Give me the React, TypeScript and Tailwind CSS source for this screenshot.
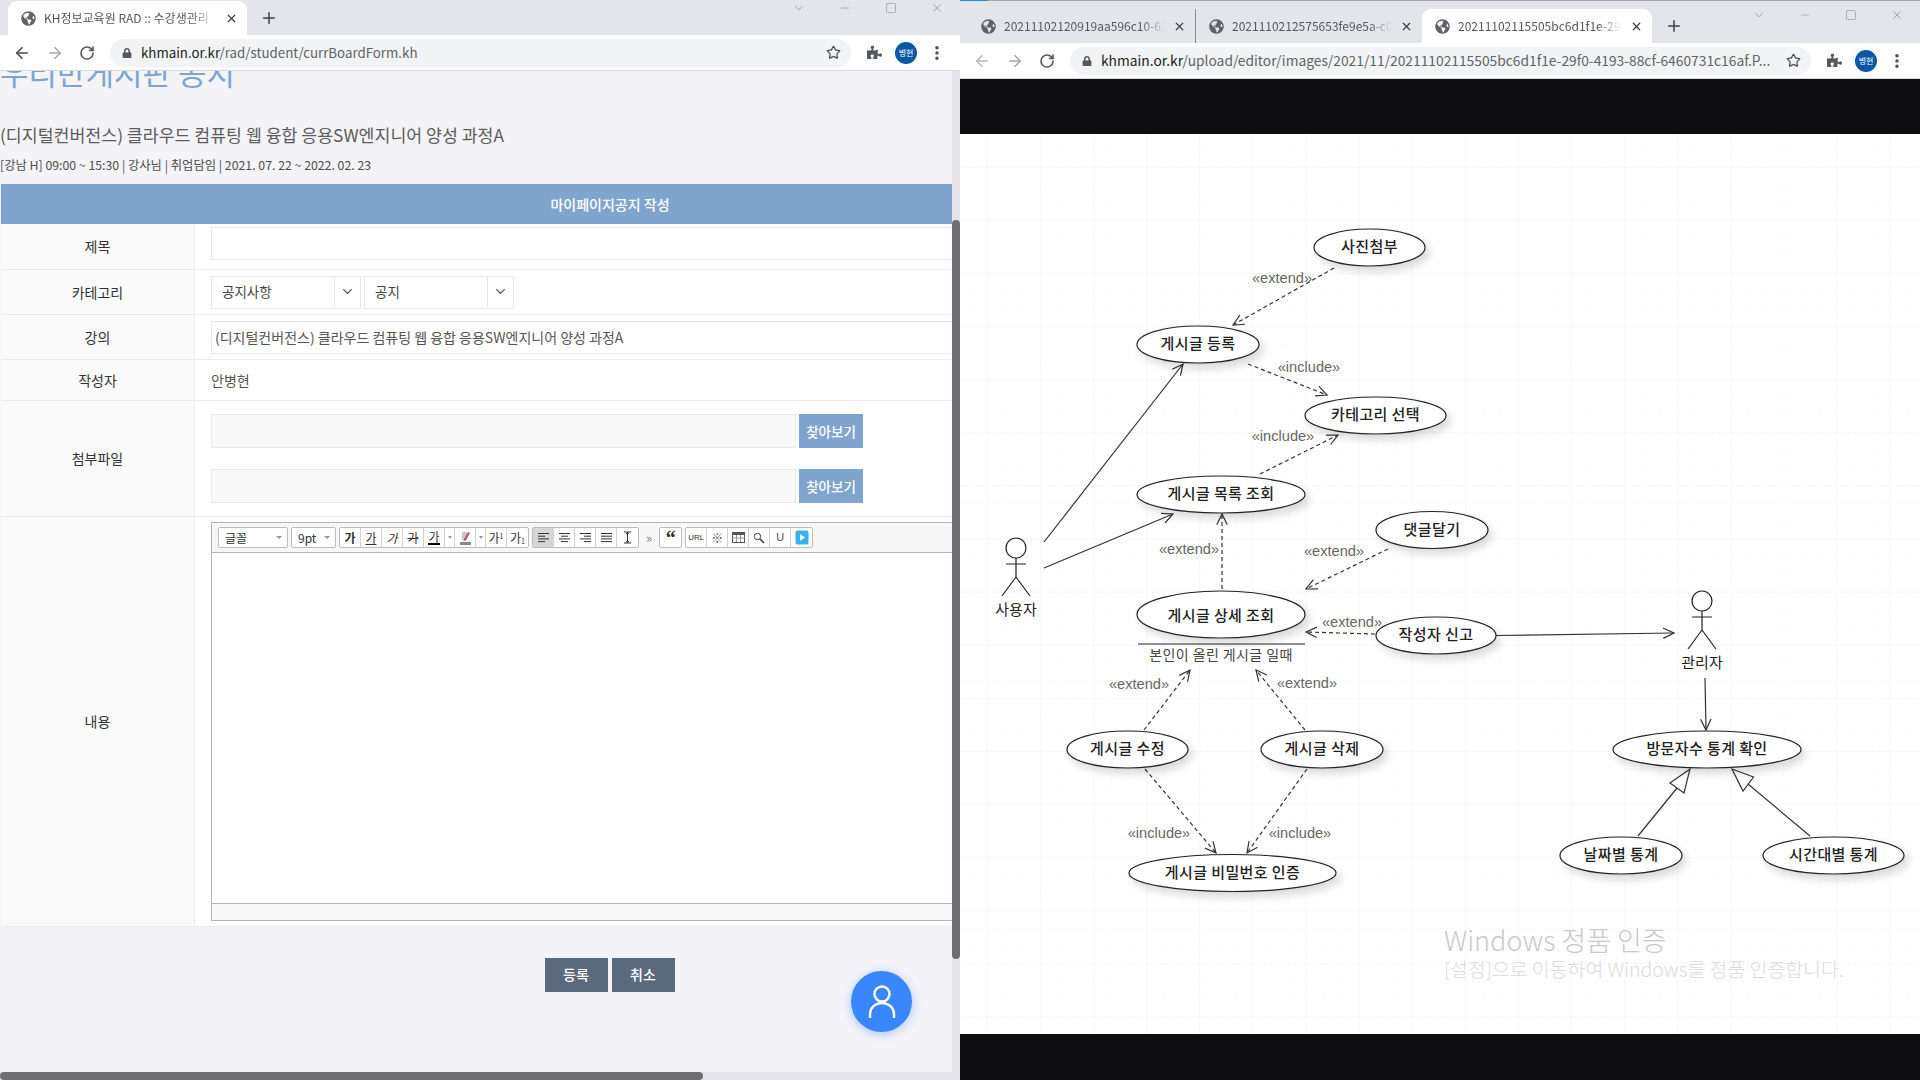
import React from "react";
import { ArrowLeft, ArrowRight, ChevronDown, EllipsisVertical, Minus, Plus, RotateCw, Square, Star, X } from "lucide-react";
import { FaGlobeAmericas, FaLock, FaPuzzlePiece } from "react-icons/fa";

const KR = "font-['Noto_Sans_CJK_KR','Liberation_Sans',sans-serif]";

type Tab = { title: string; width: number; active?: boolean; sep?: boolean };

function ChromeTab({ tab }: { tab: Tab }) {
  return (
    <div
      style={{ width: tab.width }}
      className={`relative flex h-full items-center gap-[8px] pl-[13px] pr-[9px] text-[12px] text-[#55585c] ${tab.active ? "rounded-t-[9px] bg-white" : ""} ${tab.sep ? "border-r border-[#8a8c90]" : ""}`}
    >
      <FaGlobeAmericas className="shrink-0 text-[#5f6368]" size={15} />
      <span className="flex-1 overflow-hidden whitespace-nowrap [mask-image:linear-gradient(to_right,black_85%,transparent)]">{tab.title}</span>
      <X className="shrink-0 text-[#3c4043]" size={13} strokeWidth={2.2} />
    </div>
  );
}

function Chrome({ tabs, url, barH, pad, first, urlSize }: { tabs: Tab[]; url: string; barH: string; pad: string; first: boolean; urlSize: string }) {
  return (
    <div className="shrink-0">
      <div className={`flex items-end bg-[#e4e5ea] ${barH} ${pad}`}>
        <div className="flex h-full items-stretch">
          {tabs.map((t) => (
            <ChromeTab key={t.title} tab={t} />
          ))}
        </div>
        <div className="flex h-full w-[44px] items-center justify-center">
          <Plus className="text-[#3c4043]" size={18} strokeWidth={2} />
        </div>
        <div className="flex-1" />
      </div>
      <div className="flex h-[36px] items-center border-b border-[#d7d8da] bg-white pr-[12px]">
        <div className="flex w-[110px] items-center gap-[15px] pl-[13px]">
          <ArrowLeft className={first ? "text-[#4b4e52]" : "text-[#b8babd]"} size={18} strokeWidth={2.2} />
          <ArrowRight className="text-[#a9abae]" size={18} strokeWidth={2.2} />
          <RotateCw className="text-[#55585c]" size={16} strokeWidth={2.4} />
        </div>
        <div className={`flex h-[28px] w-[741px] items-center rounded-full bg-[#f1f3f4] pl-[12px] pr-[10px] text-[#5f6368] ${urlSize}`}>
          <FaLock className="mr-[9px] shrink-0 text-[#55585c]" size={10} />
          <span className="flex-1 overflow-hidden whitespace-nowrap">
            <span className="text-[#202124]">khmain.or.kr</span>
            {url}
          </span>
          <Star className="ml-[4px] shrink-0 text-[#4b4e52]" size={15} strokeWidth={2} />
        </div>
        <FaPuzzlePiece className="ml-[16px] shrink-0 text-[#55585c]" size={15} />
        <div className="ml-[13px] flex h-[22px] w-[22px] shrink-0 items-center justify-center rounded-full bg-[#0b56a5] text-[8px] text-white">병현</div>
        <EllipsisVertical className="ml-[11px] shrink-0 text-[#4b4e52]" size={18} strokeWidth={2.6} />
      </div>
    </div>
  );
}

function WindowControls({ top }: { top: string }) {
  return (
    <div className={`absolute right-0 flex items-center text-[#8f9194] ${top}`}>
      <ChevronDown className="mr-[33px]" size={14} strokeWidth={1.3} />
      <Minus className="mr-[34px]" size={12} strokeWidth={1.3} />
      <Square className="mr-[33px]" size={12} strokeWidth={1.2} />
      <X className="mr-[16px]" size={14} strokeWidth={1.2} />
    </div>
  );
}

function Row({ label, h, children, center }: { label: string; h: string; children: React.ReactNode; center?: boolean }) {
  return (
    <div className={`grid grid-cols-[194px_1fr] border-b border-[#ececef] ${h}`}>
      <div className="flex items-center justify-center border-r border-[#ececef] bg-[#fafafa] text-[14px] text-[#333]">{label}</div>
      <div className={`flex bg-white pl-[16px] ${center === false ? "" : "items-center"}`}>{children}</div>
    </div>
  );
}

function SelectBox({ text }: { text: string }) {
  return (
    <div className="flex h-[33px] w-[150px] items-center border border-[#e8e8ea] bg-white pb-[1px] text-[13.5px] text-[#444]">
      <span className="flex-1 pl-[10px]">{text}</span>
      <div className="flex h-full w-[26px] items-center justify-center border-l border-[#e8e8ea]">
        <ChevronDown className="text-[#555]" size={15} strokeWidth={2.2} />
      </div>
    </div>
  );
}

function FileRow() {
  return (
    <div className="flex items-stretch gap-[3px]">
      <div className="h-[34px] w-[585px] border border-[#e9e9eb] bg-[#f9f9fa]" />
      <div className="flex w-[64px] items-center justify-center bg-[#7fa5cf] text-[13.5px] font-medium text-white">찾아보기</div>
    </div>
  );
}

function Tb({ children, on }: { children: React.ReactNode; on?: boolean }) {
  return (
    <div className={`flex h-full w-[21px] items-center justify-center border-r border-[#d2d2d2] text-[12px] leading-none text-[#333] last:border-r-0 ${on ? "bg-[#d6d6d6]" : ""}`}>
      {children}
    </div>
  );
}

function Group({ children }: { children: React.ReactNode }) {
  return <div className="flex h-[21px] rounded-[2px] border border-[#bdbdbd] bg-white">{children}</div>;
}

function AlignIcon({ lines }: { lines: [number, number][] }) {
  return (
    <svg width="11" height="11" viewBox="0 0 11 11">
      {lines.map(([a, b], i) => (
        <line key={i} x1={a} x2={b} y1={1.5 + i * 2.7} y2={1.5 + i * 2.7} stroke="#333" strokeWidth="1" />
      ))}
    </svg>
  );
}

function Caret() {
  return <span className="ml-auto mr-[5px] h-0 w-0 border-x-[3px] border-t-[3px] border-x-transparent border-t-[#999]" />;
}

function MiniDrop() {
  return (
    <div className="flex h-full w-[10px] items-center justify-center border-r border-[#d2d2d2]">
      <span className="h-0 w-0 border-x-[2px] border-t-[3px] border-x-transparent border-t-[#999]" />
    </div>
  );
}

function EditorToolbar() {
  return (
    <div className="flex h-[30px] items-center gap-[3px] border-b border-[#b5b5b5] bg-[#f7f7f7] pl-[6px] text-[12px] text-[#333]">
      <div className="flex h-[21px] w-[70px] items-center rounded-[2px] border border-[#bdbdbd] bg-white pl-[6px]">
        글꼴
        <Caret />
      </div>
      <div className="flex h-[21px] w-[45px] items-center rounded-[2px] border border-[#bdbdbd] bg-white pl-[6px]">
        9pt
        <Caret />
      </div>
      <Group>
        <Tb><span className="font-bold">가</span></Tb>
        <Tb><span className="underline">가</span></Tb>
        <Tb><span className="italic">가</span></Tb>
        <Tb><span className="line-through">가</span></Tb>
        <Tb><span className="border-b-2 border-black">가</span></Tb>
        <MiniDrop />
        <Tb>
          <svg width="13" height="14" viewBox="0 0 13 14">
            <path d="M3 1h5v8H3z" fill="#c9c9c9" />
            <path d="M9 1 5 8l-.5 2.5L7 9l4-7z" fill="#c2557a" />
            <rect x="1" y="11" width="11" height="3" fill="#8a8a8a" />
          </svg>
        </Tb>
        <MiniDrop />
        <Tb><span>가<sup className="text-[7px]">1</sup></span></Tb>
        <Tb><span>가<sub className="text-[7px]">1</sub></span></Tb>
      </Group>
      <Group>
        <Tb on><AlignIcon lines={[[0, 11], [0, 7], [0, 11], [0, 7]]} /></Tb>
        <Tb><AlignIcon lines={[[0, 11], [2, 9], [0, 11], [2, 9]]} /></Tb>
        <Tb><AlignIcon lines={[[0, 11], [4, 11], [0, 11], [4, 11]]} /></Tb>
        <Tb><AlignIcon lines={[[0, 11], [0, 11], [0, 11], [0, 11]]} /></Tb>
        <Tb>
          <svg width="9" height="13" viewBox="0 0 9 13">
            <path d="M1 1h7M1 12h7M4.5 1v11M3 3.2 4.5 1.6 6 3.2M3 9.8l1.5 1.6L6 9.8" stroke="#333" fill="none" />
          </svg>
        </Tb>
      </Group>
      <span className="mx-[4px] text-[13px] text-[#888]">»</span>
      <Group>
        <Tb><span className="font-['Liberation_Serif',serif] text-[20px] font-bold leading-[26px]">“</span></Tb>
      </Group>
      <Group>
        <Tb><span className="font-['Liberation_Sans',sans-serif] text-[8px]">URL</span></Tb>
        <Tb><span className="text-[12px] text-[#555]">※</span></Tb>
        <Tb>
          <svg width="13" height="11" viewBox="0 0 13 11">
            <rect x=".5" y=".5" width="12" height="10" fill="#fff" stroke="#555" />
            <rect x=".5" y=".5" width="12" height="2.5" fill="#555" />
            <path d="M.5 6h12M4.5 3v7M8.5 3v7" stroke="#999" />
          </svg>
        </Tb>
        <Tb>
          <svg width="12" height="12" viewBox="0 0 12 12">
            <circle cx="4.5" cy="4.5" r="3.2" fill="none" stroke="#444" />
            <path d="m7 7 4 4" stroke="#444" strokeWidth="1.6" />
          </svg>
        </Tb>
        <Tb><span className="font-['Liberation_Sans',sans-serif] text-[11px] text-[#555]">U</span></Tb>
        <Tb>
          <svg width="14" height="15" viewBox="0 0 14 15">
            <rect x=".5" y=".5" width="13" height="14" rx="2" fill="#38b1ef" />
            <path d="m5 4 5 3.5L5 11z" fill="#fff" />
          </svg>
        </Tb>
      </Group>
    </div>
  );
}

function BoardForm() {
  return (
    <div className={`relative flex h-[1009px] flex-col overflow-hidden bg-[#f3f3f8] ${KR}`}>
      <div className="flex min-h-0 flex-1">
        <div className="min-w-0 flex-1 overflow-hidden">
          <div className="h-[113px] w-[1219px] overflow-hidden">
            <div className="mt-[-21px] h-[44px] text-[31px] leading-[44px] text-[#7fa5cf]">우리반게시판 공지</div>
            <div className="mt-[28px] text-[17.3px] leading-[26px] text-[#5c5c5c]">(디지털컨버전스) 클라우드 컴퓨팅 웹 융합 응용SW엔지니어 양성 과정A</div>
            <div className="mt-[8px] text-[12.3px] leading-[18px] text-[#4c4c4c]">[강남 H] 09:00 ~ 15:30 | 강사님 | 취업담임 | 2021. 07. 22 ~ 2022. 02. 23</div>
          </div>
          <div className="ml-[1px] w-[1218px]">
            <div className="flex h-[40px] items-center justify-center bg-[#7fa5cf] text-[14px] font-medium text-white">마이페이지공지 작성</div>
            <Row label="제목" h="h-[46px]">
              <div className="mb-[7px] h-[33px] w-[1002px] border border-[#e8e8ea]" />
            </Row>
            <Row label="카테고리" h="h-[45px]">
              <div className="flex gap-[3px]">
                <SelectBox text="공지사항" />
                <SelectBox text="공지" />
              </div>
            </Row>
            <Row label="강의" h="h-[45px]">
              <div className="flex h-[33px] w-[1002px] items-center border border-[#e8e8ea] pl-[3px] text-[14px] text-[#555]">(디지털컨버전스) 클라우드 컴퓨팅 웹 융합 응용SW엔지니어 양성 과정A</div>
            </Row>
            <Row label="작성자" h="h-[41px]">
              <span className="text-[14px] text-[#555]">안병현</span>
            </Row>
            <Row label="첨부파일" h="h-[116px]">
              <div className="flex flex-col gap-[21px]">
                <FileRow />
                <FileRow />
              </div>
            </Row>
            <Row label="내용" h="h-[410px]" center={false}>
              <div className="mt-[5px] flex h-[399px] w-[1002px] flex-col border border-[#b5b5b5]">
                <EditorToolbar />
                <div className="flex-1 bg-white" />
                <div className="h-[17px] border-t border-[#b5b5b5] bg-[#f8f8f8]" />
              </div>
            </Row>
            <div className="mt-[31px] flex justify-center gap-[4px] pr-[1px]">
              <div className="flex h-[34px] w-[63px] items-center justify-center bg-[#5a6a7e] pb-[1px] text-[14px] font-medium text-white">등록</div>
              <div className="flex h-[34px] w-[63px] items-center justify-center bg-[#5a6a7e] pb-[1px] text-[14px] font-medium text-white">취소</div>
            </div>
          </div>
        </div>
        <div className="flex w-[8px] shrink-0 flex-col bg-[#e4e4ea]">
          <div className="mt-[149px] h-[739px] rounded-full bg-[#6e6e73]" />
        </div>
      </div>
      <div className="flex h-[8px] shrink-0 bg-[#e4e4ea]">
        <div className="w-[703px] rounded-full bg-[#6e6e73]" />
      </div>
      <div className="absolute left-[851px] top-[900px] flex h-[61px] w-[61px] items-center justify-center rounded-full bg-[#3a86ff] shadow-[0_2px_10px_rgba(58,134,255,0.4)]">
        <svg width="32" height="36" viewBox="0 0 32 36" fill="none" stroke="#fff" strokeWidth="2.4">
          <circle cx="16" cy="10" r="7.5" />
          <path d="M4 34v-4a12 11 0 0 1 24 0v4" />
        </svg>
      </div>
    </div>
  );
}

type Oval = { cx: number; cy: number; rx: number; ry?: number; text: string; dy?: number };
const ovals: Oval[] = [
  { cx: 1369.5, cy: 247.5, rx: 55.5, text: "사진첨부" },
  { cx: 1198, cy: 344.5, rx: 61, text: "게시글 등록" },
  { cx: 1375.5, cy: 415.5, rx: 70.5, text: "카테고리 선택" },
  { cx: 1221, cy: 494.5, rx: 84, text: "게시글 목록 조회" },
  { cx: 1432, cy: 530, rx: 56, text: "댓글달기" },
  { cx: 1221, cy: 614.5, rx: 84, ry: 23.5, text: "게시글 상세 조회", dy: 2 },
  { cx: 1436, cy: 635.5, rx: 60, text: "작성자 신고" },
  { cx: 1127.5, cy: 749.5, rx: 60.5, text: "게시글 수정" },
  { cx: 1322, cy: 749.5, rx: 61, text: "게시글 삭제" },
  { cx: 1232.5, cy: 873, rx: 103.5, text: "게시글 비밀번호 인증" },
  { cx: 1707, cy: 749.5, rx: 94, text: "방문자수 통계 확인" },
  { cx: 1621, cy: 855.5, rx: 61, text: "날짜별 통계" },
  { cx: 1833.5, cy: 855.5, rx: 70.5, text: "시간대별 통계" },
];

// [x1, y1, x2, y2, dashed]
const arrows: [number, number, number, number, boolean][] = [
  [1044, 542, 1183, 364, false],
  [1044, 568, 1173, 514, false],
  [1222, 589, 1222, 514, true],
  [1334, 268, 1233, 325, true],
  [1248, 364, 1327, 395, true],
  [1260, 474, 1338, 435, true],
  [1388, 549, 1306, 589, true],
  [1375, 634, 1306, 632, true],
  [1496, 635.5, 1674, 633, false],
  [1705, 678, 1706, 730, false],
  [1144, 730, 1190, 670, true],
  [1305, 730, 1256, 670, true],
  [1145, 769, 1216, 853, true],
  [1307, 769, 1247, 853, true],
];

const labels: [number, number, string][] = [
  [1282, 278, "«extend»"],
  [1309, 367, "«include»"],
  [1283, 436, "«include»"],
  [1189, 549, "«extend»"],
  [1334, 551, "«extend»"],
  [1352, 622, "«extend»"],
  [1139, 684, "«extend»"],
  [1307, 683, "«extend»"],
  [1159, 833, "«include»"],
  [1300, 833, "«include»"],
];

function Actor({ x, y, name }: { x: number; y: number; name: string }) {
  return (
    <g fill="none" stroke="#222" strokeWidth="1.2">
      <circle cx={x} cy={y} r="10" fill="#fff" />
      <path d={`M${x} ${y + 10}V${y + 29}M${x - 10} ${y + 16}H${x + 10}M${x} ${y + 29}L${x - 14} ${y + 48}M${x} ${y + 29}L${x + 14} ${y + 48}`} />
      <text x={x} y={y + 67} textAnchor="middle" fontSize="15" fill="#222" stroke="none">{name}</text>
    </g>
  );
}

function Arrow({ a }: { a: [number, number, number, number, boolean] }) {
  const [x1, y1, x2, y2, dashed] = a;
  const t = Math.atan2(y2 - y1, x2 - x1);
  const p = (d: number) => `${x2 - 12 * Math.cos(t + d)} ${y2 - 12 * Math.sin(t + d)}`;
  return (
    <g fill="none" stroke="#333" strokeWidth="1.2">
      <line x1={x1} y1={y1} x2={x2} y2={y2} strokeDasharray={dashed ? "4 3" : undefined} />
      <path d={`M${p(0.45)}L${x2} ${y2}L${p(-0.45)}`} />
    </g>
  );
}

function Diagram() {
  return (
    <svg viewBox="960 134 960 900" className={`block h-[900px] w-[960px] bg-white ${KR}`}>
      <defs>
        <pattern id="fine" x="987" y="273" width="17.7" height="17.7" patternUnits="userSpaceOnUse">
          <path d="M17.7 0H0V17.7" fill="none" stroke="#f9f9fa" />
        </pattern>
        <pattern id="coarse" x="987" y="273" width="53.1" height="53.1" patternUnits="userSpaceOnUse">
          <path d="M53.1 0H0V53.1" fill="none" stroke="#f3f3f5" />
        </pattern>
        <filter id="soft" x="-20%" y="-40%" width="150%" height="200%">
          <feDropShadow dx="4" dy="5" stdDeviation="4" floodColor="#000" floodOpacity="0.15" />
        </filter>
      </defs>
      <rect x="960" y="134" width="960" height="900" fill="url(#fine)" />
      <rect x="960" y="134" width="960" height="900" fill="url(#coarse)" />
      {arrows.map((a, i) => (
        <Arrow key={i} a={a} />
      ))}
      <g fill="none" stroke="#333" strokeWidth="1.2">
        <line x1="1638" y1="836" x2="1677" y2="788" />
        <path d="M1690 769L1670 783L1684 793Z" fill="#fff" />
        <line x1="1810" y1="836" x2="1748" y2="784" />
        <path d="M1732 769L1753.5 777L1743 791Z" fill="#fff" />
      </g>
      {ovals.map((o) => (
        <g key={o.text}>
          <ellipse cx={o.cx} cy={o.cy} rx={o.rx} ry={o.ry ?? 18.5} fill="#fff" stroke="#222" strokeWidth="1.2" filter="url(#soft)" />
          <text x={o.cx} y={o.cy + 4.5 + (o.dy ?? 0)} textAnchor="middle" fontSize="15" fontWeight="500" letterSpacing=".4" fill="#222">{o.text}</text>
        </g>
      ))}
      <line x1="1138" x2="1305" y1="644" y2="644" stroke="#222" strokeWidth="1.2" />
      <text x="1221" y="660" textAnchor="middle" fontSize="14" letterSpacing=".4" fill="#444">본인이 올린 게시글 일때</text>
      <Actor x={1016} y={548} name="사용자" />
      <Actor x={1702} y={601} name="관리자" />
      {labels.map(([x, y, t], i) => (
        <text key={i} x={x} y={y + 5} textAnchor="middle" fontSize="14.6" fill="#666" className="font-['Liberation_Sans',sans-serif]">{t}</text>
      ))}
    </svg>
  );
}

export default function App() {
  const rightTabs: Tab[] = [
    { title: "20211102120919aa596c10-63", width: 228, sep: true },
    { title: "2021110212575653fe9e5a-c0f", width: 226 },
    { title: "20211102115505bc6d1f1e-29f", width: 230, active: true },
  ];
  return (
    <div className={`relative flex h-[1080px] w-[1920px] overflow-hidden ${KR}`}>
      <div className="relative flex w-[960px] shrink-0 flex-col">
        <Chrome
          first
          barH="h-[35px]"
          pad="pl-[8px] pt-[1px]"
          urlSize="text-[13.3px]"
          tabs={[{ title: "KH정보교육원 RAD :: 수강생관리", width: 239, active: true }]}
          url="/rad/student/currBoardForm.kh"
        />
        <WindowControls top="top-[1px]" />
        <BoardForm />
      </div>
      <div className="relative flex w-[960px] shrink-0 flex-col">
        <div className="h-[1px] bg-[#a5a6a9]">
          <div className="h-full w-[28px] bg-[#2f86e8]" />
        </div>
        <Chrome
          first={false}
          barH="h-[42px]"
          pad="pl-[8px] pt-[8px]"
          urlSize="text-[13.8px]"
          tabs={rightTabs}
          url="/upload/editor/images/2021/11/20211102115505bc6d1f1e-29f0-4193-88cf-6460731c16af.P..."
        />
        <WindowControls top="top-[8px]" />
        <div className="h-[55px] shrink-0 bg-[#0d0d0f]" />
        <Diagram />
        <div className="flex-1 bg-[#0d0d0f]" />
        <div className="absolute left-[484px] top-[925px] text-[#c9c9cc]">
          <div className="text-[27px] font-light leading-[30px]">Windows 정품 인증</div>
          <div className="mt-[1px] text-[19.4px] font-light leading-[26px] text-[#dcdcde]">[설정]으로 이동하여 Windows를 정품 인증합니다.</div>
        </div>
      </div>
    </div>
  );
}
